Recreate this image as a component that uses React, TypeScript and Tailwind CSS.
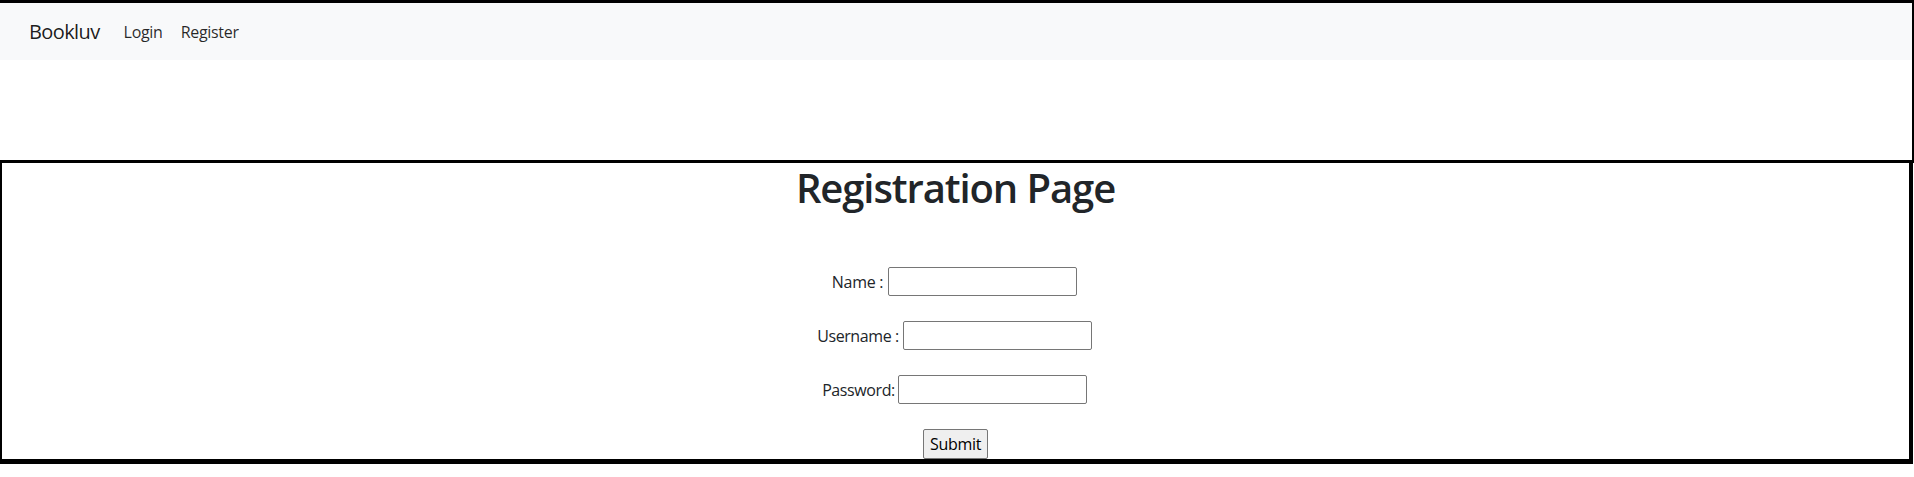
import React from "react";

export default function App() {
  const font = { fontFamily: '"Open Sans", "Noto Sans", Arial, sans-serif' };
  return (
    <div className="w-[1914px] h-[477px] bg-white text-[#212529]" style={font}>
      <div className="h-[163px] border-t-[3px] border-r-2 border-b-[3px] border-black">
        <nav className="h-[57px] bg-[#f8f9fa] flex items-center pl-[29px]">
          <span className="text-[20px] text-black/90 mr-[24px] tracking-[-0.6px]">Bookluv</span>
          <a className="text-[16px] text-black/85 mr-[18px] tracking-[-0.3px]">Login</a>
          <a className="text-[16px] text-black/85 tracking-[-0.3px]">Register</a>
        </nav>
      </div>
      <div className="h-[301px] mr-[1px] border-l-2 border-r-4 border-b-[5px] border-black flex flex-col items-center">
        <h1 className="text-[40px] leading-[48px] font-semibold tracking-[-1.1px] mt-[1px]">Registration Page</h1>
        <div className="flex flex-col items-center gap-[25px] mt-[55px] text-[16px]">
          <div className="flex items-center gap-[5px] -ml-[2px]">
            <label className="tracking-[-0.3px]">Name :</label>
            <input className="w-[189px] h-[29px] border border-[#767676] rounded-[2px] bg-white" />
          </div>
          <div className="flex items-center gap-[4px] -ml-[2px]">
            <label className="tracking-[-0.4px]">Username :</label>
            <input className="w-[189px] h-[29px] border border-[#767676] rounded-[2px] bg-white" />
          </div>
          <div className="flex items-center gap-[3px] -ml-[2px]">
            <label className="tracking-[-0.4px]">Password:</label>
            <input type="password" className="w-[189px] h-[29px] border border-[#767676] rounded-[2px] bg-white" />
          </div>
          <button className="w-[65px] h-[30px] border border-[#767676] rounded-[2px] bg-[#efefef] text-[16px] text-black tracking-[-0.3px]">
            Submit
          </button>
        </div>
      </div>
    </div>
  );
}
